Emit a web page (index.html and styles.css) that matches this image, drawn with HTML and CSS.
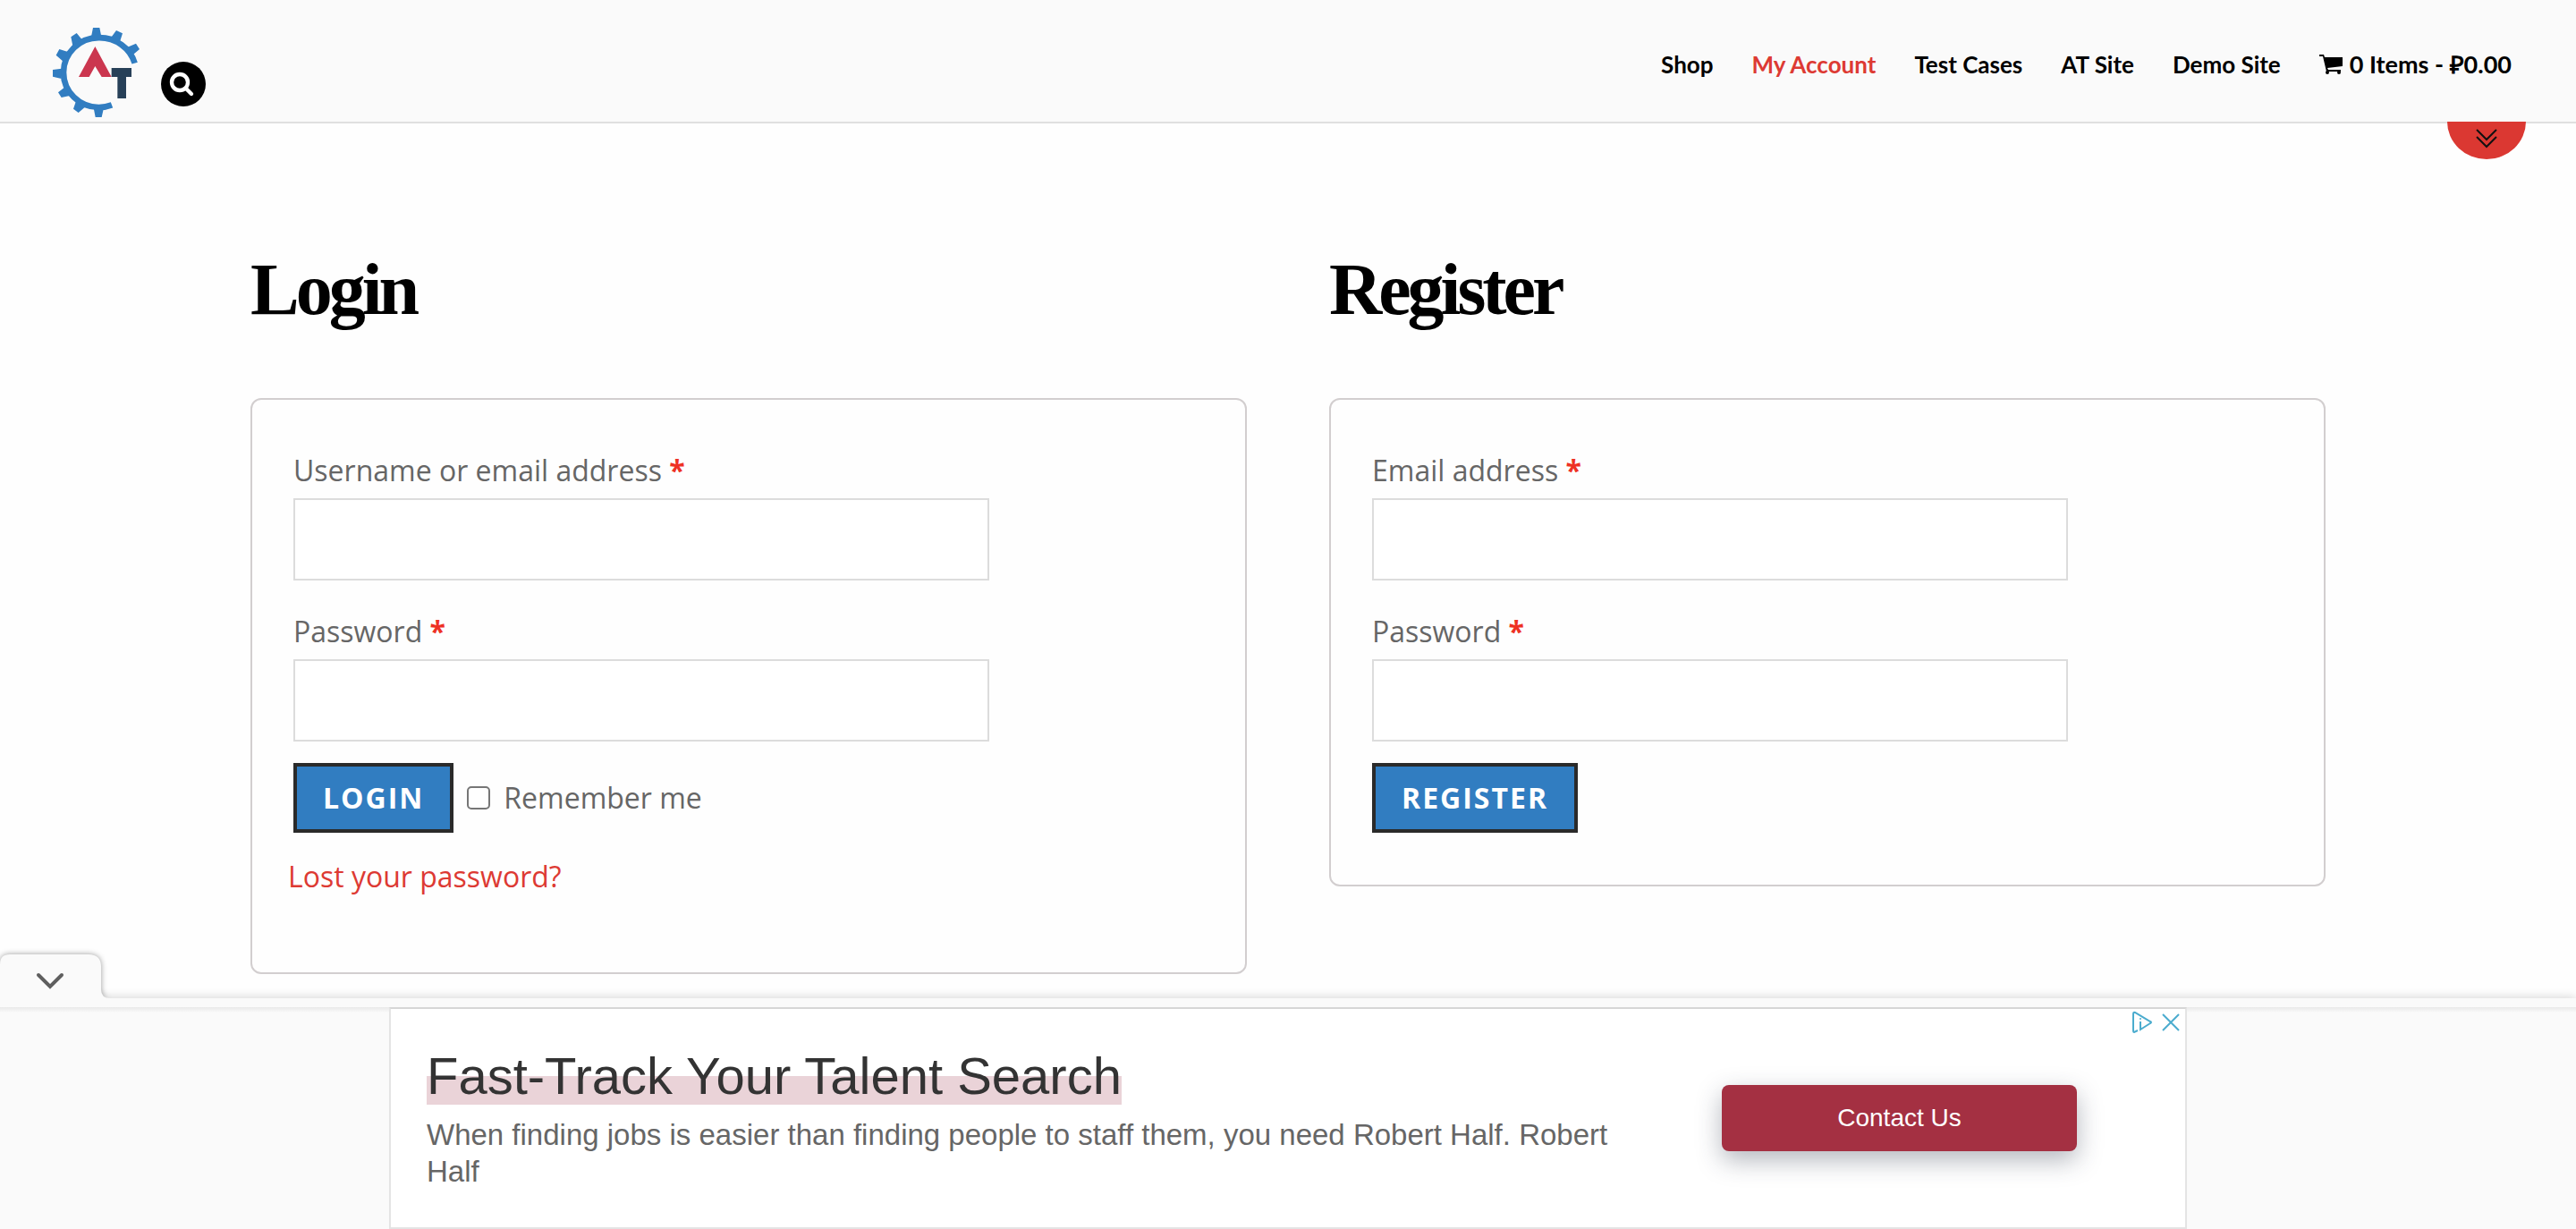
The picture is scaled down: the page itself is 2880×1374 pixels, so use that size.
FILE: index.html
```html
<!DOCTYPE html>
<html lang="en">
<head>
<meta charset="utf-8">
<title>My Account</title>
<meta name="viewport" content="width=device-width, initial-scale=1">
<link rel="stylesheet" href="styles.css">
</head>
<body>
<header class="site-header">
  <div class="brand">
    <a class="logo" href="#" aria-label="Home">
      <svg viewBox="177 93 291 300" width="97" height="100" aria-hidden="true">
        <path d="M452 212A123 117 0 0 0 332 126.500A118 117 0 0 0 213 243A118 117 0 0 0 332 360Q354 360 375 352" fill="none" stroke="#317dc1" stroke-width="20"/>
        <path fill="#317dc1" d="M312 93h22l6 30h-34zM390 102l21 10-9 28-28-16zM456 146l12 19-24 20-20-25zM238 124l19-13 18 22-31 21zM199 165l-11 20 24 21 16-32zM177 234v23l29 7v-34zM195 310l11 17 28-6-16-29zM246 365l17 13 21-18-30-18zM320 393h21l7-31h-34z"/>
        <path fill="#cb364f" d="M319 156l55 102h-33l-22-36-20 36h-35z"/>
        <rect x="374" y="228" width="67" height="30" fill="#274058"/>
        <rect x="394" y="228" width="29" height="102" fill="#274058"/>
      </svg>
    </a>
    <button class="search-button" type="button" aria-label="Search">
      <svg viewBox="0 0 150 150" width="50" height="50" aria-hidden="true">
        <g fill="none" stroke="#fff" stroke-width="13" stroke-linecap="round">
          <circle cx="63" cy="69" r="27"/>
          <path d="M84 90l18 18"/>
        </g>
      </svg>
    </button>
  </div>
  <nav class="main-nav" aria-label="Main">
    <a href="#">Shop</a>
    <a class="current" href="#">My Account</a>
    <a href="#">Test Cases</a>
    <a href="#">AT Site</a>
    <a href="#">Demo Site</a>
    <a class="cart" href="#">
      <svg viewBox="0 0 26 22" width="26" height="22" aria-hidden="true">
        <path d="M0 0h5l1 3h20v10L9 15l1 2h14v2H8L4 2H0z"/>
        <circle cx="9" cy="20" r="2"/><circle cx="22" cy="20" r="2"/>
      </svg>
      <span>0 Items - ₽0.00</span>
    </a>
  </nav>
  <button class="pull-tab" type="button" aria-label="Show more">
    <svg viewBox="0 0 24 22" width="24" height="22" aria-hidden="true">
      <path d="M1 1l11 11L23 1M1 9l11 11L23 9" fill="none" stroke="#111" stroke-width="2"/>
    </svg>
  </button>
</header>

<main class="account">
  <section>
    <h2>Login</h2>
    <form class="card login-card">
      <div class="field">
        <label for="username">Username or email address <span class="required">*</span></label>
        <input id="username" type="text">
      </div>
      <div class="field">
        <label for="password">Password <span class="required">*</span></label>
        <input id="password" type="password">
      </div>
      <div class="actions">
        <button class="submit" type="button">LOGIN</button>
        <input id="remember" type="checkbox">
        <label for="remember">Remember me</label>
      </div>
      <a class="lost" href="#">Lost your password?</a>
    </form>
  </section>
  <section>
    <h2>Register</h2>
    <form class="card">
      <div class="field">
        <label for="reg-email">Email address <span class="required">*</span></label>
        <input id="reg-email" type="email">
      </div>
      <div class="field">
        <label for="reg-password">Password <span class="required">*</span></label>
        <input id="reg-password" type="password">
      </div>
      <div class="actions">
        <button class="submit" type="button">REGISTER</button>
      </div>
    </form>
  </section>
</main>

<aside class="ad-dock" aria-label="Advertisement">
  <button class="ad-toggle" type="button" aria-label="Hide advertisement">
    <svg class="ad-tab" viewBox="0 0 130 60" width="130" height="60" aria-hidden="true">
      <path class="ad-tab-shape" d="M0 22Q0 11 11 11H99Q113 11 113 25V50Q113 60 123 60H0z"/>
      <path d="M43 34l13 13L69 34" fill="none" stroke="#5f5f5f" stroke-width="4" stroke-linecap="round"/>
    </svg>
  </button>
  <div class="ad-strip"></div>
  <div class="ad-panel">
    <div class="ad">
      <div class="ad-copy">
        <h3><span>Fast-Track Your Talent Search</span></h3>
        <p>When finding jobs is easier than finding people to staff them, you need Robert Half. Robert Half</p>
      </div>
      <a class="ad-cta" href="#">Contact Us</a>
      <div class="ad-controls">
        <button type="button" aria-label="Ad choices">
          <svg viewBox="0 0 24 26" width="24" height="26" aria-hidden="true">
            <path d="M7 22L3 24Q2 24 2 22V4Q2 1 4 2L21 12Q23 13 21 14L10 21V12" fill="none" stroke="#4bacce" stroke-width="2"/>
            <circle cx="10" cy="9" r="1" fill="#4bacce"/>
          </svg>
        </button>
        <button type="button" aria-label="Close ad">
          <svg viewBox="0 0 20 20" width="20" height="20" aria-hidden="true">
            <path d="M1 1l18 18M19 1L1 19" fill="none" stroke="#4bacce" stroke-width="2"/>
          </svg>
        </button>
      </div>
    </div>
  </div>
</aside>
</body>
</html>
```
FILE: styles.css
```css
* {
  box-sizing: border-box;
}

body {
  margin: 0;
  background: #fefefe;
  color: #666;
  font: 32px/46px "Open Sans", "Noto Sans", sans-serif;
}

button {
  margin: 0;
  padding: 0;
  border: 0;
  background: none;
  font: inherit;
  cursor: pointer;
}

svg {
  display: block;
}

a {
  color: #dd3a33;
  text-decoration: none;
}

.site-header {
  position: relative;
  display: flex;
  justify-content: space-between;
  align-items: flex-start;
  padding: 31px 72px 5px 59px;
  border-bottom: 2px solid #e0e0e0;
  background: #fafafa;
}

.brand {
  display: flex;
  align-items: flex-end;
  gap: 24px;
}

.search-button {
  margin-bottom: 12px;
  border-radius: 50%;
  background: #000;
}

.main-nav {
  display: flex;
  gap: 43px;
  padding-top: 23px;
  font: bold 26px/36px Lato, sans-serif;
}

.main-nav a {
  color: #000;
}

.main-nav .current {
  color: #dd3a33;
}

.main-nav .cart {
  display: flex;
  align-items: center;
  gap: 8px;
  font-size: 27px;
}

.pull-tab {
  position: absolute;
  top: 100%;
  right: 56px;
  display: flex;
  justify-content: center;
  align-items: center;
  width: 88px;
  height: 42px;
  padding-bottom: 4px;
  border-radius: 0 0 44px 44px / 0 0 42px 42px;
  background: #db3832;
}

.account {
  display: grid;
  grid-template-columns: 1fr 1fr;
  gap: 92px;
  align-items: start;
  max-width: 2320px;
  margin: 0 auto;
  padding: 136px 0 285px;
}

h2 {
  margin: 0 0 71px;
  color: #000;
  font: bold 82px/100px "Liberation Serif", serif;
  letter-spacing: -4px;
}

.card {
  padding: 56px 46px 58px;
  border: 2px solid #d2cecf;
  border-radius: 12px;
}

.login-card {
  padding-bottom: 84px;
}

.field {
  display: flex;
  flex-direction: column;
  gap: 8px;
  margin-bottom: 24px;
}

.field:first-child {
  margin-bottom: 34px;
}

.required {
  color: #ee3124;
  font-weight: bold;
}

.field input {
  width: 100%;
  max-width: 778px;
  height: 92px;
  padding: 0 24px;
  border: 2px solid #dcdcdc;
  background: #fff;
  font: inherit;
}

.actions {
  display: flex;
  align-items: center;
  gap: 15px;
}

.submit {
  padding: 12px 29px;
  border: 4px solid #2a2a2a;
  background: #317dc1;
  color: #fff;
  font-weight: bold;
  letter-spacing: 2px;
}

.actions input {
  appearance: none;
  width: 26px;
  height: 26px;
  margin: 0;
  border: 2px solid #767676;
  border-radius: 5px;
  background: #fff;
}

.lost {
  display: block;
  width: fit-content;
  margin: 26px 0 0 -6px;
}

.ad-dock {
  position: fixed;
  right: 0;
  bottom: 0;
  left: 0;
}

.ad-toggle {
  position: absolute;
  bottom: 100%;
  left: 0;
  z-index: 1;
}

.ad-tab-shape {
  fill: #fafafa;
  filter: drop-shadow(0 0 3px rgba(0, 0, 0, 0.4));
}

.ad-strip {
  height: 10px;
  background: #fafafa;
  box-shadow: 0 0 12px rgba(0, 0, 0, 0.2);
}

.ad-panel {
  position: relative;
  padding: 0 435px;
  background: linear-gradient(#e9e9e9, #fafafa 6px);
}

.ad {
  position: relative;
  display: flex;
  justify-content: space-between;
  align-items: center;
  padding: 42px 121px 42px 40px;
  border: 2px solid #e4e4e4;
  border-top-color: #d6d6d6;
  background: #fff;
  font-family: "Liberation Sans", sans-serif;
}

.ad-copy {
  max-width: 1360px;
}

.ad h3 {
  margin: 0 0 12px;
  color: #333;
  font-size: 58px;
  font-weight: normal;
  line-height: 66px;
}

.ad h3 span {
  background: linear-gradient(transparent 50%, #ead3d8 50%);
}

.ad p {
  margin: 0;
  font-size: 33px;
  line-height: 41px;
}

.ad-cta {
  width: 397px;
  padding: 16px;
  border-radius: 8px;
  background: #a43042;
  box-shadow: 0 10px 28px rgba(40, 50, 70, 0.35);
  color: #fff;
  font-size: 28px;
  line-height: 42px;
  text-align: center;
}

.ad-controls {
  position: absolute;
  top: 2px;
  right: 6px;
  display: flex;
  align-items: center;
  gap: 10px;
}
```
